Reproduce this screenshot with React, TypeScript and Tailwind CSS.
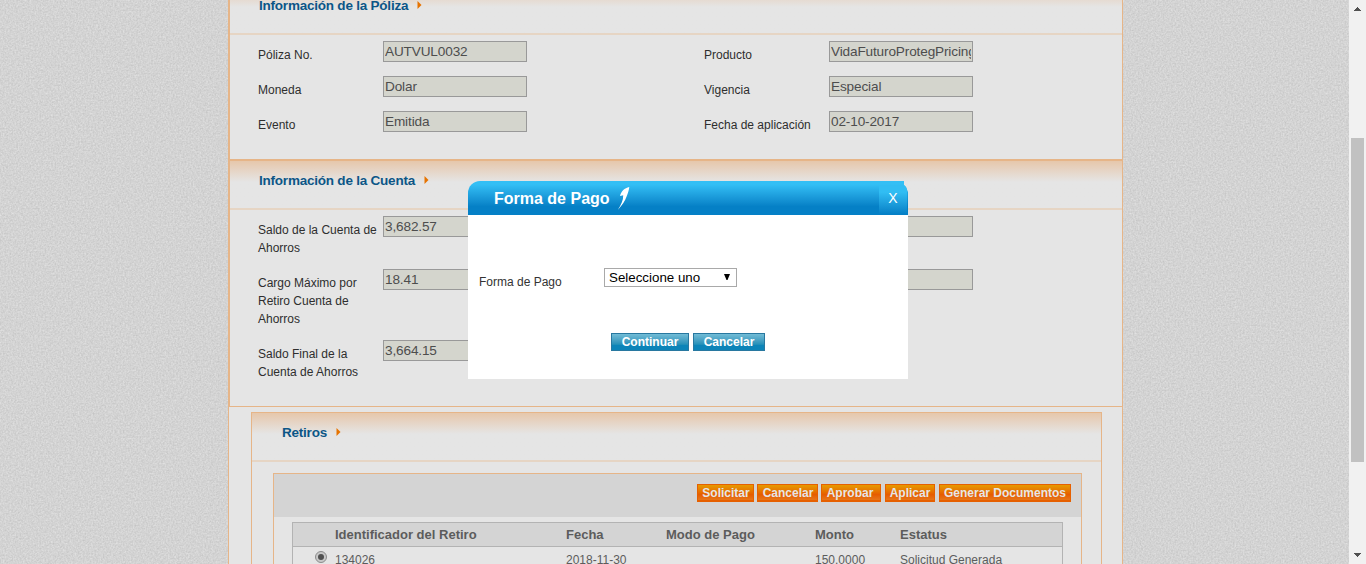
import React from "react";

function Background() {
  return (
    <svg className="absolute inset-0 h-full w-full" aria-hidden="true">
      <filter id="grain" x="0" y="0" width="100%" height="100%" colorInterpolationFilters="sRGB">
        <feTurbulence type="fractalNoise" baseFrequency="0.6" numOctaves="2" seed="4" />
        <feColorMatrix values="0.14 0.04 0 0 0.738  0.14 0.04 0 0 0.738  0.14 0.04 0 0 0.738  0 0 0 0 1" />
      </filter>
      <rect width="100%" height="100%" filter="url(#grain)" />
    </svg>
  );
}

function SectionHeader({ title, indent = "pl-[29px]" }: { title: string; indent?: string }) {
  return (
    <div
      className={`h-[49px] border-b-2 border-[#e6d5c4] bg-linear-to-b from-[#e6c7ab] to-[#e5e5e5] to-[21px] pt-[10px] ${indent}`}
    >
      <h2 className="flex h-5 items-center text-[13.5px] font-bold tracking-[-0.22px] text-[#0c5687]">
        {title}
        <svg className="mt-[-2px] ml-[9px]" width="5" height="8" viewBox="0 0 5 8">
          <path d="M0.5 0L4.5 4L0.5 8Z" fill="#e67300" />
        </svg>
      </h2>
    </div>
  );
}

type FieldData = { label: string; value: string };

function Field({ label, value }: FieldData) {
  return (
    <div className="flex w-[446px] shrink-0 items-start">
      <label className="w-[125px] pt-[5px] pr-1 pb-3 text-[12px] leading-[18px] text-[#2e2e2e]">{label}</label>
      <div className="h-[21px] w-[144px] border border-[#999] bg-[#d4d5cd] px-px">
        <div className="overflow-hidden text-[13.6px] leading-[19px] tracking-[-0.14px] whitespace-nowrap text-[#4d4d4d]">
          {value}
        </div>
      </div>
    </div>
  );
}

function Section({ title, rows }: { title: string; rows: FieldData[][] }) {
  return (
    <section className="border-y border-l border-[#e6b588]">
      <SectionHeader title={title} />
      <div className="pt-[6px] pb-[13px] pl-7">
        {rows.map((row, i) => (
          <div key={i} className="flex">
            {row.map((f, j) => (
              <Field key={j} {...f} />
            ))}
          </div>
        ))}
      </div>
    </section>
  );
}

function ActionButton({ children, className }: { children: string; className: string }) {
  return (
    <button
      className={`h-[18px] border border-[#e66000] bg-linear-to-b from-[#e69a00] via-[#e65c00] via-60% to-[#e67a1c] text-center text-[12px] leading-[15px] font-bold whitespace-nowrap text-[#e6e6e6] shadow-[inset_0_-1px_0_#e66000] ${className}`}
    >
      {children}
    </button>
  );
}

function DialogButton({ children, className }: { children: string; className: string }) {
  return (
    <button
      className={`h-[18px] border border-[#2878a0] bg-linear-to-b from-[#72bcd6] from-0% via-[#2490b8] via-65% to-[#0c84b8] to-70% text-center text-[12px] leading-[15px] font-bold text-white ${className}`}
    >
      {children}
    </button>
  );
}

const policy: FieldData[][] = [
  [{ label: "Póliza No.", value: "AUTVUL0032" }, { label: "Producto", value: "VidaFuturoProtegPricing" }],
  [{ label: "Moneda", value: "Dolar" }, { label: "Vigencia", value: "Especial" }],
  [{ label: "Evento", value: "Emitida" }, { label: "Fecha de aplicación", value: "02-10-2017" }],
];

const account: FieldData[][] = [
  [{ label: "Saldo de la Cuenta de Ahorros", value: "3,682.57" }, { label: "", value: "" }],
  [{ label: "Cargo Máximo por Retiro Cuenta de Ahorros", value: "18.41" }, { label: "", value: "" }],
  [{ label: "Saldo Final de la Cuenta de Ahorros", value: "3,664.15" }],
];

function Withdrawals() {
  return (
    <section className="mt-[5px] mr-5 ml-[22px] h-[200px] border border-[#e6b588]">
      <SectionHeader title="Retiros" indent="pl-[30px]" />
      <div className="mt-[11px] mr-[19px] ml-[21px] h-[150px] border border-[#e6b588]">
        <div className="flex h-[43px] items-start justify-end bg-[#d4d4d4] pt-[10px] pr-[10px]">
          <ActionButton className="mr-[3px] w-[57px] pl-px">Solicitar</ActionButton>
          <ActionButton className="mr-[3px] w-[61px] pl-px">Cancelar</ActionButton>
          <ActionButton className="mr-1 w-[60px] pr-0.5">Aprobar</ActionButton>
          <ActionButton className="mr-1 w-[50px]">Aplicar</ActionButton>
          <ActionButton className="w-[132px]">Generar Documentos</ActionButton>
        </div>
        <div className="mt-[5px] mr-[18px] ml-[18px] h-[90px] border border-[#b3b3b3] text-[#5c5c5c]">
          <div className="grid h-6 grid-cols-[42px_231px_100px_149px_85px_1fr] items-center border-b border-[#b3b3b3] bg-[#d4d4d4] text-[13px] font-bold">
            <span />
            <span>Identificador del Retiro</span>
            <span>Fecha</span>
            <span>Modo de Pago</span>
            <span>Monto</span>
            <span>Estatus</span>
          </div>
          <div className="grid grid-cols-[42px_231px_100px_149px_85px_1fr] pt-1 text-[12px] leading-[18px]">
            <span className="ml-[22px] flex size-3 items-center justify-center rounded-full border border-[#8c8c8c] bg-[#c8c8c8]">
              <span className="size-[6px] rounded-full bg-[#505050]" />
            </span>
            <span>134026</span>
            <span>2018-11-30</span>
            <span />
            <span>150.0000</span>
            <span>Solicitud Generada</span>
          </div>
        </div>
      </div>
    </section>
  );
}

function PaymentDialog() {
  return (
    <div role="dialog" className="absolute top-[181px] left-[468px] h-[198px] w-[440px]">
      <header className="flex h-[34px] items-start rounded-tl-[12px] bg-linear-to-b from-[#33bff5] from-10% to-[#0580c6] to-75% pl-[26px] [clip-path:polygon(0_0,436px_0,436px_4px,438px_6px,440px_11px,440px_34px,0_34px)]">
        <h1 className="mt-2 text-[16px] leading-5 font-bold text-white">Forma de Pago</h1>
        <svg className="mt-[5px] ml-[7px]" width="13" height="25" viewBox="0 0 13 25">
          <path d="M12.3 1C7.5 2 4.2 5 3 10L6.2 9.2C6.4 14 4 19 0.8 24C5 19.5 8 15 9.8 10C11 7 12 4 12.3 1Z" fill="#fff" />
        </svg>
        <button className="mt-1 mr-px ml-auto h-[29px] w-[28px] bg-linear-to-b from-[#31bdf3] from-25% to-[#0580c6] pb-[3px] text-[14px] leading-[26px] text-white">
          X
        </button>
      </header>
      <div className="h-[164px] bg-white pt-[53px] pl-[11px]">
        <div className="flex items-start">
          <label className="w-[125px] pt-[5px] text-[12px] leading-[18px] text-[#333]">Forma de Pago</label>
          <div className="flex h-[19px] w-[133px] items-center border border-[#a9a9a9] bg-white pl-1 text-[13.33px] leading-[17px] text-black">
            <span className="grow">Seleccione uno</span>
            <svg className="mr-[6px] mb-px" width="6" height="6" viewBox="0 0 6 6">
              <path d="M0 0H6L3.5 6H2.5Z" fill="#000" />
            </svg>
          </div>
        </div>
        <div className="mt-[42px] ml-[132px] flex gap-1">
          <DialogButton className="w-[78px]">Continuar</DialogButton>
          <DialogButton className="w-[72px]">Cancelar</DialogButton>
        </div>
      </div>
    </div>
  );
}

function Scrollbar() {
  return (
    <div className="relative flex h-full w-[17px] flex-col items-center bg-[#f1f1f1]">
      <svg className="mt-[7px]" width="7" height="4" viewBox="0 0 7 4" shapeRendering="crispEdges">
        <path d="M3 0h1v1h1v1h1v1h1v1H0V3h1V2h1V1h1z" fill="#505050" />
      </svg>
      <div className="mt-[127px] h-[324px] w-[13px] bg-[#c1c1c1]" />
      <svg className="mt-auto mb-[7px]" width="7" height="4" viewBox="0 0 7 4" shapeRendering="crispEdges">
        <path d="M0 0h7v1H6v1H5v1H4v1H3V3H2V2H1V1H0z" fill="#505050" />
      </svg>
    </div>
  );
}

export default function App() {
  return (
    <div className="relative flex h-[564px] w-[1366px] overflow-hidden bg-[#d3d3d3] font-['Liberation_Sans',Arial,sans-serif]">
      <Background />
      <div className="relative h-full flex-1 overflow-hidden">
        <main className="mt-[-15px] ml-[228px] h-[700px] w-[895px] border-x border-[#e6b588] bg-[#e5e5e5]">
          <Section title="Información de la Póliza" rows={policy} />
          <Section title="Información de la Cuenta" rows={account} />
          <Withdrawals />
        </main>
      </div>
      <Scrollbar />
      <PaymentDialog />
    </div>
  );
}
